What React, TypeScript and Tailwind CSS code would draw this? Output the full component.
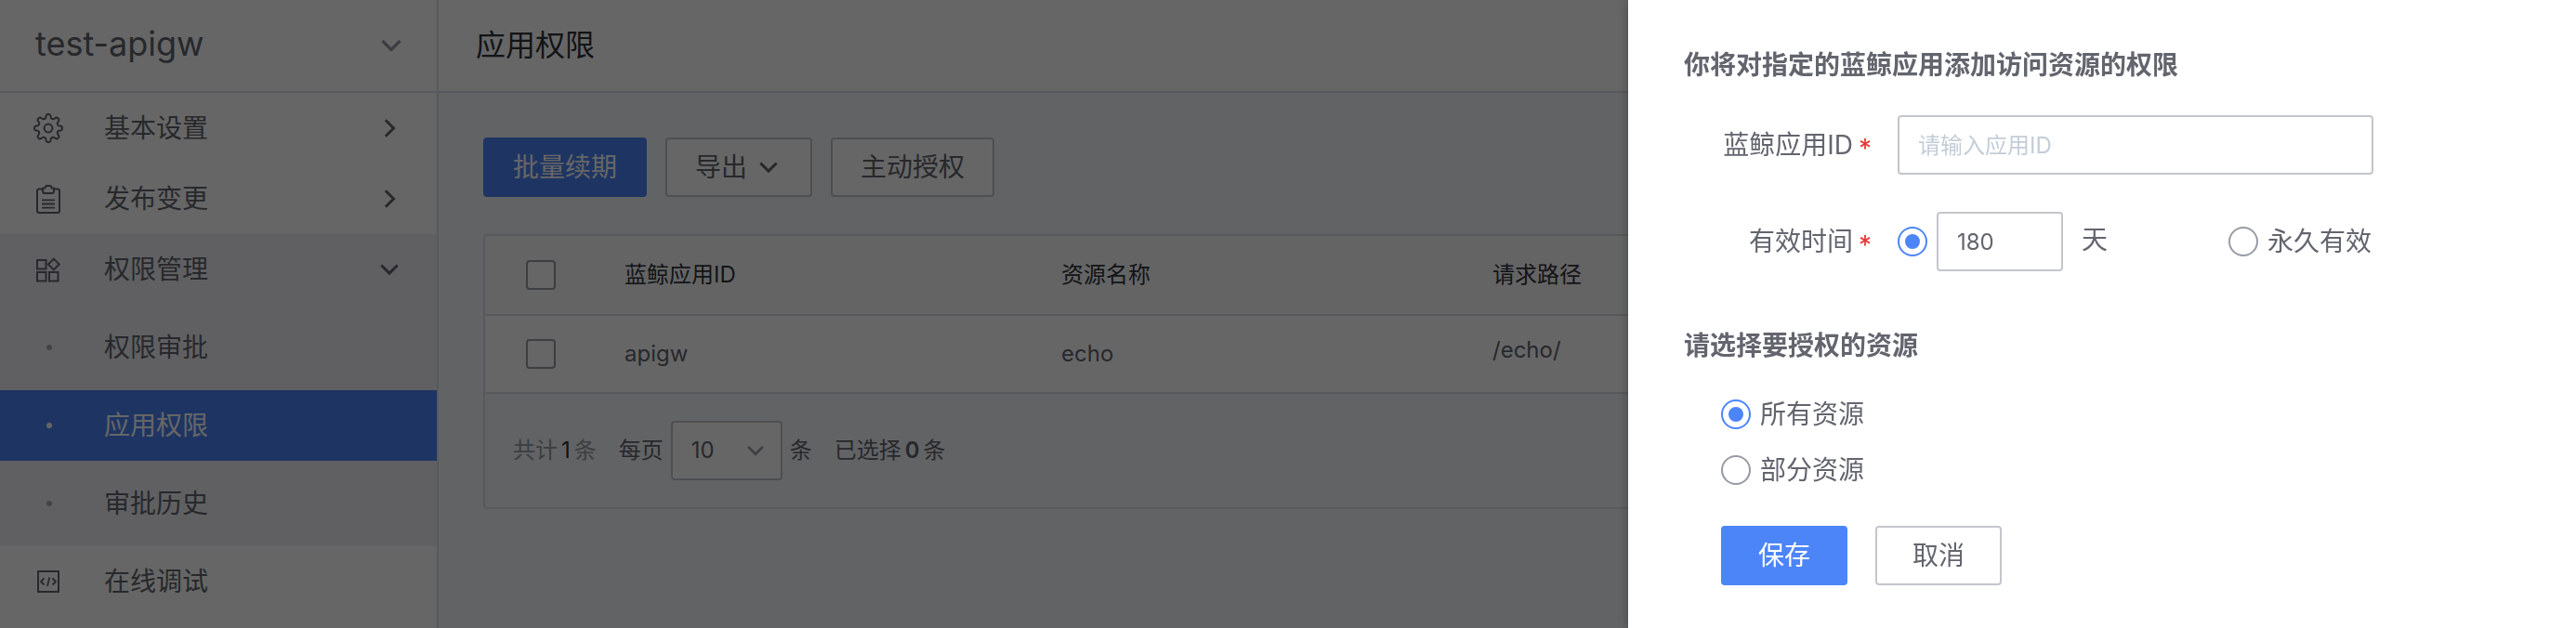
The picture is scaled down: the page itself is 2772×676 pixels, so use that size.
import { useState } from "react";
import type { ReactNode } from "react";

const FONT = "font-['Inter','Noto_Sans_CJK_SC',sans-serif]";

function gearPath() {
  const points: string[] = [];
  for (let i = 0; i < 160; i++) {
    const a = (i / 160) * Math.PI * 2;
    const r = 12.9 + 2.1 * Math.tanh(2 * Math.cos(8 * a));
    points.push(`${(16 + r * Math.cos(a)).toFixed(2)} ${(16 + r * Math.sin(a)).toFixed(2)}`);
  }
  return `M${points.join("L")}Z`;
}

function Icon({ children }: { children: ReactNode }) {
  return (
    <svg viewBox="0 0 32 32" className="size-8 shrink-0" fill="none" stroke="currentColor" strokeWidth="2" strokeLinejoin="round" aria-hidden="true">
      {children}
    </svg>
  );
}

const GearIcon = () => (
  <Icon>
    <path d={gearPath()} />
    <circle cx="16" cy="16" r="4.4" />
  </Icon>
);

const ClipboardIcon = () => (
  <Icon>
    <path d="M10 5.500H6a2 2 0 0 0-2 2V29a2 2 0 0 0 2 2h20a2 2 0 0 0 2-2V7.500a2 2 0 0 0-2-2h-4" />
    <path d="M10 4.500h2.500l1-2.500h5l1 2.500H22V8a2 2 0 0 1-2 2h-8a2 2 0 0 1-2-2z" />
    <path d="M9 17.300h14M9 21.500h14M9 25.700h14" strokeWidth="1.800" />
  </Icon>
);

const GridIcon = () => (
  <Icon>
    <path d="M4 6h9.500v9.500H4zM4 19h9.500v9.500H4zM17 19h9.500v9.500H17zM21.800 4.600l5.900 5.900-5.900 5.900-5.900-5.900z" strokeLinejoin="miter" />
  </Icon>
);

const CodeIcon = () => (
  <Icon>
    <path d="M5 5h22v22H5z" />
    <path d="M11.500 12.500L8 16l3.500 3.500M20.500 12.500L24 16l-3.500 3.500M17.200 11.500l-2.200 9.500" strokeWidth="1.800" />
  </Icon>
);

function ChevronDown({ className }: { className?: string }) {
  return (
    <svg viewBox="0 0 24 24" className={className} fill="none" stroke="currentColor" strokeWidth="3.200" aria-hidden="true">
      <path d="M2.500 7l9.500 9.500L21.500 7" />
    </svg>
  );
}

function ChevronRight({ className }: { className?: string }) {
  return (
    <svg viewBox="0 0 24 24" className={className} fill="none" stroke="currentColor" strokeWidth="3.200" aria-hidden="true">
      <path d="M7.500 2.500L17 12l-9.500 9.500" />
    </svg>
  );
}

function NavItem({ icon, label, trailing }: { icon: ReactNode; label: string; trailing?: ReactNode }) {
  return (
    <a href="#" className="flex h-[76px] items-center pr-10 pl-9">
      {icon}
      <span className="ml-11 flex-1">{label}</span>
      {trailing}
    </a>
  );
}

function SubItem({ label, active }: { label: string; active?: boolean }) {
  return (
    <a
      href="#"
      aria-current={active ? "page" : undefined}
      className={active ? "flex h-[76px] items-center bg-[#4c85f8] pl-[50px] text-white" : "flex h-[76px] items-center pl-[50px]"}
    >
      <span className={active ? "size-1.5 rounded-full bg-white" : "size-1.5 rounded-full bg-[#a9abb3]"} />
      <span className="ml-14">{label}</span>
    </a>
  );
}

const RADIO =
  "size-8 shrink-0 appearance-none rounded-full border-2 border-[#979ba5] bg-white bg-clip-content p-[6px] checked:border-[#4c85f8] checked:bg-[#4c85f8]";
const CHECKBOX = "block size-8 appearance-none rounded border-2 border-[#979ba5] bg-white";
const BUTTON = "h-16 rounded border-2 border-[#c4c6cc] bg-white";

function Sidebar() {
  return (
    <aside className="w-[472px] shrink-0 border-r-2 border-[#dcdee5] bg-white">
      <button type="button" className="flex h-[100px] w-full items-center justify-between border-b-2 border-[#dcdee5] pr-[37px] pl-[38px] text-left">
        <span className="pb-1 text-4xl">test-apigw</span>
        <ChevronDown className="size-6 text-[#979ba5]" />
      </button>
      <nav>
        <NavItem icon={<GearIcon />} label="基本设置" trailing={<ChevronRight className="size-[22px]" />} />
        <NavItem icon={<ClipboardIcon />} label="发布变更" trailing={<ChevronRight className="size-[22px]" />} />
        <div className="bg-[#f0f1f5]">
          <NavItem icon={<GridIcon />} label="权限管理" trailing={<ChevronDown className="size-[22px]" />} />
          <div className="flex flex-col gap-2 py-2">
            <SubItem label="权限审批" />
            <SubItem label="应用权限" active />
            <SubItem label="审批历史" />
          </div>
        </div>
        <NavItem icon={<CodeIcon />} label="在线调试" />
      </nav>
    </aside>
  );
}

function PermissionTable() {
  return (
    <section className="mt-10 rounded border-2 border-[#dcdee5] text-2xl">
      <table className="w-full table-fixed border-separate border-spacing-0 text-left">
        <colgroup>
          <col className="w-[120px]" />
          <col className="w-[470px]" />
          <col className="w-[464px]" />
          <col />
        </colgroup>
        <thead>
          <tr className="bg-[#fafbfd] text-[#313238] *:h-[86px] *:border-b-2 *:border-[#dcdee5]">
            <th className="pl-11">
              <input type="checkbox" aria-label="全选" className={CHECKBOX} />
            </th>
            <th className="px-[30px] font-normal">蓝鲸应用ID</th>
            <th className="px-[30px] font-normal">资源名称</th>
            <th className="px-[30px] font-normal">请求路径</th>
          </tr>
        </thead>
        <tbody>
          <tr className="bg-white *:h-[84px] *:border-b-2 *:border-[#dcdee5]">
            <td className="pl-11">
              <input type="checkbox" aria-label="apigw" className={CHECKBOX} />
            </td>
            <td className="px-[30px]">apigw</td>
            <td className="px-[30px]">echo</td>
            <td className="px-[30px] pb-2">/echo/</td>
          </tr>
        </tbody>
      </table>
      <div className="flex h-[122px] items-center px-[30px]">
        <span className="flex gap-1 text-[#979ba5]">
          共计<span className="text-[#313238]">1</span>条
        </span>
        <label className="ml-6 flex items-center gap-2">
          每页
          <span className="relative">
            <select defaultValue="10" className="block h-16 w-[120px] appearance-none rounded border-2 border-[#c4c6cc] bg-white pl-5">
              <option>10</option>
              <option>20</option>
              <option>50</option>
            </select>
            <ChevronDown className="pointer-events-none absolute top-[22px] right-[19px] size-5 text-[#979ba5]" />
          </span>
          条
        </label>
        <span className="ml-6 flex gap-1">
          已选择<span className="font-semibold">0</span>条
        </span>
      </div>
    </section>
  );
}

function Main() {
  return (
    <main className="min-w-0 flex-1 bg-[#f5f7fa]">
      <header className="flex h-[100px] items-center border-b-2 border-[#dcdee5] bg-white px-10">
        <h1 className="text-[32px] leading-10 text-[#313238]">应用权限</h1>
      </header>
      <div className="p-12">
        <div className="flex gap-5">
          <button type="button" className="h-16 rounded bg-[#4c85f8] px-8 text-white">批量续期</button>
          <button type="button" className={`${BUTTON} flex items-center gap-3 pr-[34px] pl-[30px]`}>
            导出
            <ChevronDown className="size-[22px]" />
          </button>
          <button type="button" className={`${BUTTON} px-[30px]`}>主动授权</button>
        </div>
        <PermissionTable />
      </div>
    </main>
  );
}

function FieldLabel({ htmlFor, children }: { htmlFor: string; children: ReactNode }) {
  return (
    <label htmlFor={htmlFor} className="flex w-[200px] shrink-0 items-center justify-end gap-1.5">
      {children}
      <span className="w-3 pt-2 text-[28px] leading-8 text-[#ea3636]">*</span>
    </label>
  );
}

function GrantPanel() {
  const [expiry, setExpiry] = useState("custom");
  const [scope, setScope] = useState("all");
  return (
    <section
      role="dialog"
      aria-labelledby="grant-title"
      className="fixed inset-y-0 right-0 w-[1020px] overflow-hidden bg-white px-[60px] pt-[50px] shadow-[0_0_12px_rgba(0,0,0,0.3)]"
    >
      <form onSubmit={(e) => e.preventDefault()}>
        <h2 id="grant-title" className="leading-10 font-bold">你将对指定的蓝鲸应用添加访问资源的权限</h2>
        <div className="mt-[34px] flex items-center gap-[30px]">
          <FieldLabel htmlFor="app-id">蓝鲸应用ID</FieldLabel>
          <input
            id="app-id"
            type="text"
            placeholder="请输入应用ID"
            className="h-16 w-[512px] rounded border-2 border-[#c4c6cc] bg-white px-5 text-2xl placeholder:text-[#c3cdd7]"
          />
        </div>
        <div className="mt-10 flex items-center gap-[30px]">
          <FieldLabel htmlFor="days">有效时间</FieldLabel>
          <div className="flex w-[510px] items-center">
            <input
              type="radio"
              name="expiry"
              aria-label="有效天数"
              className={RADIO}
              checked={expiry === "custom"}
              onChange={() => setExpiry("custom")}
            />
            <input id="days" type="text" defaultValue="180" className="ml-2.5 h-16 w-[136px] rounded border-2 border-[#c4c6cc] bg-white px-5 text-2xl" />
            <span className="ml-5 pb-1">天</span>
            <label className="ml-auto flex items-center gap-2.5">
              <input type="radio" name="expiry" className={RADIO} checked={expiry === "forever"} onChange={() => setExpiry("forever")} />
              永久有效
            </label>
          </div>
        </div>
        <h2 className="mt-[60px] leading-10 font-bold">请选择要授权的资源</h2>
        <div className="mt-[38px] flex flex-col items-start gap-7 pl-10 leading-8">
          <label className="flex items-center gap-2.5">
            <input type="radio" name="scope" className={RADIO} checked={scope === "all"} onChange={() => setScope("all")} />
            所有资源
          </label>
          <label className="flex items-center gap-2.5">
            <input type="radio" name="scope" className={RADIO} checked={scope === "part"} onChange={() => setScope("part")} />
            部分资源
          </label>
        </div>
        <div className="mt-11 flex gap-[30px] pl-10">
          <button type="submit" className="h-16 w-[136px] rounded bg-[#4c85f8] text-white">保存</button>
          <button type="button" className={`${BUTTON} w-[136px]`}>取消</button>
        </div>
      </form>
    </section>
  );
}

export default function App() {
  return (
    <div className={`${FONT} flex min-h-screen text-[28px] leading-10 text-[#63656e]`}>
      <Sidebar />
      <Main />
      <div className="fixed inset-0 bg-black/60" />
      <GrantPanel />
    </div>
  );
}
